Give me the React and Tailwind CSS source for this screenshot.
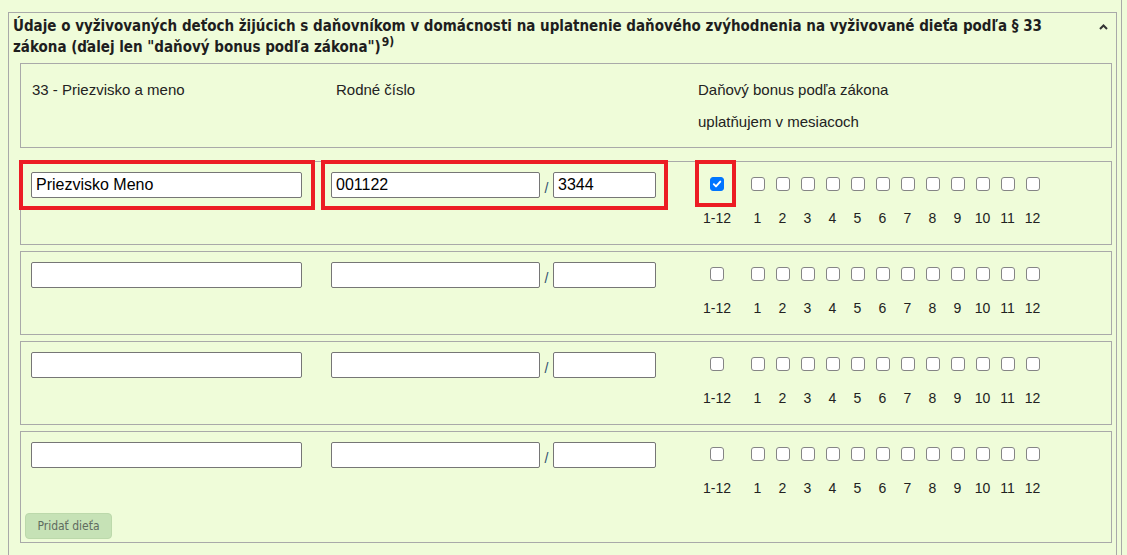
import React from 'react';

const MONTHS = [1, 2, 3, 4, 5, 6, 7, 8, 9, 10, 11, 12];

const emptyChildren = [
    { name: 'Priezvisko Meno', rc1: '001122', rc2: '3344', all: true, marked: true },
    { name: '', rc1: '', rc2: '', all: false },
    { name: '', rc1: '', rc2: '', all: false },
    { name: '', rc1: '', rc2: '', all: false, last: true },
];

const Box = ({ checked }) => (
    <span
        className={
            checked
                ? 'flex items-center justify-center w-[14px] h-[14px] rounded-[3px] bg-[#0075ff] border border-[#0075ff]'
                : 'block w-[14px] h-[14px] rounded-[3px] bg-white border border-[#858585]'
        }
    >
        {checked && (
            <svg width="10" height="10" viewBox="0 0 10 10">
                <path d="M1.8 5.2 L4 7.4 L8.3 2.6" fill="none" stroke="#fff" strokeWidth="1.9" strokeLinecap="round" strokeLinejoin="round" />
            </svg>
        )}
    </span>
);

const MonthCell = ({ label, checked, wide }) => (
    <label className={`flex flex-col items-center ${wide ? 'w-[30px]' : 'w-[25px]'}`}>
        <Box checked={checked} />
        <span className="mt-[19px] leading-[16px] text-[14px] text-[#222]">{label}</span>
    </label>
);

const ChildRow = ({ child }) => (
    <div className="relative border border-[#a9a9a9]">
        <div className="flex items-start h-[82px] pt-[10px] pl-[10px]">
            <input
                type="text"
                defaultValue={child.name}
                className="w-[271px] h-[26px] px-[4px] border border-[#767676] rounded-[2px] bg-white text-[16px] text-black outline-none"
            />
            <input
                type="text"
                defaultValue={child.rc1}
                className="ml-[29px] w-[209px] h-[26px] px-[4px] border border-[#767676] rounded-[2px] bg-white text-[16px] text-black outline-none"
            />
            <span className="w-[13px] mt-[8px] text-center text-[14px] leading-[16px] text-[#2f4f6f]">/</span>
            <input
                type="text"
                defaultValue={child.rc2}
                className="w-[103px] h-[26px] px-[4px] border border-[#767676] rounded-[2px] bg-white text-[16px] text-black outline-none"
            />
            <div className="flex ml-[46px] mt-[5px]">
                <MonthCell label="1-12" checked={child.all} wide />
                <div className="flex ml-[13px]">
                    {MONTHS.map(m => (
                        <MonthCell key={m} label={m} checked={false} />
                    ))}
                </div>
            </div>
        </div>

        {child.last && (
            <div className="pl-[4px] pb-[3px] -mt-[1px]">
                <button className="h-[26px] w-[87px] rounded-[4px] border border-[#bcd9ab] bg-[#c6e2b6] text-[12px] text-[#5f6b5f] font-['DejaVu_Sans_Condensed',sans-serif]">
                    Pridať dieťa
                </button>
            </div>
        )}

        {/* red highlight marks over the first row */}
        {child.marked && (
            <>
                <div className="absolute left-[-2px] top-[-2px] w-[296px] h-[50px] border-[4px] border-[#ec1c24]" />
                <div className="absolute left-[300px] top-[-2px] w-[347px] h-[50px] border-[4px] border-[#ec1c24]" />
                <div className="absolute left-[674px] top-[-2px] w-[41px] h-[47px] border-[4px] border-[#ec1c24]" />
            </>
        )}
    </div>
);

export default function App() {
    return (
        <div className="min-h-screen bg-[#effcd9] font-['Liberation_Sans',Arial,sans-serif] overflow-hidden">
            <div className="w-[1122px] min-h-[555px] border-r border-[#a9a9a9] pl-[8px] pr-[4px] pt-[12px]">
                <div className="border border-[#a9a9a9] border-b-0 pb-[20px]">
                    <div className="flex items-start pl-[4px] pt-[3px]">
                        <h2 className="flex-1 text-[15px] leading-[21px] font-bold text-[#1e1e1e] font-['DejaVu_Sans_Condensed','DejaVu_Sans',sans-serif]">
                            Údaje o vyživovaných deťoch žijúcich s daňovníkom v domácnosti na uplatnenie daňového zvýhodnenia na vyživované dieťa podľa § 33
                            <br />
                            zákona (ďalej len "daňový bonus podľa zákona")<sup className="text-[12px] ml-[1px]">9)</sup>
                        </h2>
                        <svg className="mt-[8px] mr-[8px]" width="9" height="6" viewBox="0 0 9 6">
                            <path d="M1 5 L4.5 1.5 L8 5" fill="none" stroke="#333" strokeWidth="2" />
                        </svg>
                    </div>

                    <div className="ml-[11px] mr-[4px] mt-[5px]">
                        <div className="border border-[#a9a9a9] h-[85px] mb-[13px] pl-[11px] pt-[18px] flex text-[15px] leading-[16px] text-[#222]">
                            <div className="w-[304px]">33 - Priezvisko a meno</div>
                            <div className="w-[362px]">Rodné číslo</div>
                            <div className="flex flex-col gap-[16px]">
                                <span>Daňový bonus podľa zákona</span>
                                <span>uplatňujem v mesiacoch</span>
                            </div>
                        </div>

                        <div className="flex flex-col gap-[6px]">
                            {emptyChildren.map((child, i) => (
                                <ChildRow key={i} child={child} />
                            ))}
                        </div>
                    </div>
                </div>
            </div>
        </div>
    );
}
